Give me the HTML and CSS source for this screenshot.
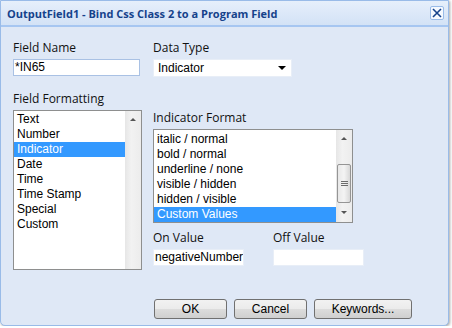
FILE: index.html
```html
<!DOCTYPE html>
<html lang="en">
<head>
    <meta charset="UTF-8" />
    <title>Bind Css Class</title>
    <link rel="stylesheet" href="styles.css">
</head>
<body>
    <div class="window">
        <div class="header">
            <span class="title">OutputField1 - Bind Css Class 2 to a Program Field</span>
            <span class="close">
                <svg width="10" height="10" viewBox="0 0 10 10"><path d="M1 1 L9 9 M9 1 L1 9" stroke="#15428b" stroke-width="1.6" /></svg>
            </span>
        </div>
        <div class="body">
            <div class="form-grid">
                <div class="form-group">
                    <label>Field Name</label>
                    <div class="textbox name-box">*IN65</div>
                </div>
                <div class="form-group">
                    <label>Data Type</label>
                    <div class="select">
                        <span>Indicator</span>
                        <span class="arrow"></span>
                    </div>
                </div>
                <div class="form-group formatting">
                    <label>Field Formatting</label>
                    <div class="listbox format-list">
                        <div class="items">
                            <div class="item">Text</div>
                            <div class="item">Number</div>
                            <div class="item selected">Indicator</div>
                            <div class="item">Date</div>
                            <div class="item">Time</div>
                            <div class="item">Time Stamp</div>
                            <div class="item">Special</div>
                            <div class="item">Custom</div>
                        </div>
                        <div class="scrollbar">
                            <span class="up"></span>
                        </div>
                    </div>
                </div>
                <div class="indicator">
                    <div class="form-group">
                        <label>Indicator Format</label>
                        <div class="listbox indicator-list">
                            <div class="items">
                                <div class="item">italic / normal</div>
                                <div class="item">bold / normal</div>
                                <div class="item">underline / none</div>
                                <div class="item">visible / hidden</div>
                                <div class="item">hidden / visible</div>
                                <div class="item selected">Custom Values</div>
                            </div>
                            <div class="scrollbar">
                                <span class="up"></span>
                                <span class="thumb"><i></i><i></i><i></i></span>
                                <span class="down"></span>
                            </div>
                        </div>
                    </div>
                    <div class="values">
                        <div class="form-group">
                            <label>On Value</label>
                            <div class="textbox value-box">negativeNumber</div>
                        </div>
                        <div class="form-group">
                            <label>Off Value</label>
                            <div class="textbox value-box"></div>
                        </div>
                    </div>
                </div>
            </div>
            <div class="buttons">
                <button class="btn">OK</button>
                <button class="btn">Cancel</button>
                <button class="btn wide">Keywords...</button>
            </div>
        </div>
    </div>
</body>
</html>
```

FILE: styles.css
```css
body {
    margin: 0;
    padding: 0;
    background-color: #ffffff;
    font-family: "Liberation Sans", Arial, sans-serif;
}

.window {
    width: 449px;
    height: 326px;
    box-sizing: border-box;
    border: 1px solid #99bbe8;
    border-radius: 0 0 5px 5px;
    background-color: #dfe8f6;
    box-shadow: 1px 1px 3px rgba(0, 0, 0, 0.35);
    display: flex;
    flex-direction: column;
    overflow: hidden;
}

.header {
    height: 24px;
    display: flex;
    align-items: center;
    justify-content: space-between;
    padding: 0 4px 0 6px;
    background: linear-gradient(#e6effb, #d3e2f6);
    border-bottom: 2px solid #a6c6f1;
}

.title {
    font-family: "Open Sans", sans-serif;
    font-weight: bold;
    font-size: 11px;
    color: #15428b;
}

.close {
    width: 14px;
    height: 14px;
    box-sizing: border-box;
    border: 1px solid #99bbe8;
    border-radius: 2px;
    background-color: #f5f9ff;
    display: flex;
    align-items: center;
    justify-content: center;
}

.body {
    flex: 1;
    padding: 12px 0 0 12px;
    display: flex;
    flex-direction: column;
}

.form-grid {
    display: grid;
    grid-template-columns: 129px 1fr;
    column-gap: 11px;
}

.form-group label {
    display: block;
    font-family: "Open Sans", sans-serif;
    font-size: 12px;
    color: #111;
    height: 17px;
    line-height: 17px;
    margin-bottom: 3px;
}

.textbox {
    height: 17px;
    box-sizing: border-box;
    border: 1px solid #a9c1e4;
    background-color: #fff;
    font-size: 12px;
    line-height: 15px;
    padding-left: 1px;
    white-space: nowrap;
    overflow: hidden;
}

.name-box {
    width: 127px;
    margin-top: 1px;
}

.select {
    width: 139px;
    height: 18px;
    box-sizing: border-box;
    background-color: #fff;
    border: 1px solid #e8eef7;
    font-size: 12px;
    line-height: 16px;
    padding-left: 4px;
    display: flex;
    justify-content: space-between;
    align-items: center;
}

.arrow {
    width: 0;
    height: 0;
    margin-right: 5px;
    border-left: 4px solid transparent;
    border-right: 4px solid transparent;
    border-top: 4px solid #000;
}

.formatting {
    margin-top: 13px;
}

.listbox {
    display: flex;
    box-sizing: border-box;
    border: 1px solid #8e8f8f;
    background-color: #fff;
}

.items {
    flex: 1;
    padding-top: 1px;
    font-size: 12px;
}

.item {
    height: 15px;
    line-height: 15px;
    padding-left: 3px;
    color: #000;
    white-space: nowrap;
}

.item.selected {
    background-color: #3399ff;
    color: #fff;
}

.format-list {
    height: 160px;
}

.indicator-list {
    width: 200px;
    height: 94px;
}

.indicator-list .items {
    padding-top: 2px;
}

.scrollbar {
    width: 16px;
    background: linear-gradient(to right, #e6e6e6, #f2f2f2 40%, #ececec);
    display: flex;
    flex-direction: column;
    align-items: center;
}

.up,
.down {
    width: 0;
    height: 0;
    border-left: 3px solid transparent;
    border-right: 3px solid transparent;
}

.up {
    margin-top: 7px;
    border-bottom: 3px solid #555;
}

.down {
    margin-top: 8px;
    border-top: 3px solid #555;
}

.thumb {
    width: 14px;
    height: 39px;
    margin-top: 24px;
    box-sizing: border-box;
    border: 1px solid #959595;
    border-radius: 2px;
    background: linear-gradient(to right, #e8e8e8, #f4f4f4 50%, #d8d8d8);
    display: flex;
    flex-direction: column;
    align-items: center;
    justify-content: center;
    gap: 1px;
}

.thumb i {
    width: 7px;
    height: 1px;
    background-color: #6c6c6c;
}

.indicator {
    padding-top: 32px;
}

.values {
    margin-top: 6px;
    display: flex;
    gap: 29px;
}

.value-box {
    width: 91px;
    border-color: #e8eef7;
}

.buttons {
    margin-top: auto;
    margin-bottom: 6px;
    padding-left: 141px;
    display: flex;
    gap: 7px;
}

.btn {
    width: 73px;
    height: 20px;
    padding: 0;
    border: 1px solid #707070;
    border-radius: 3px;
    background: linear-gradient(#f2f2f2, #ebebeb 50%, #dddddd 50%, #cfcfcf);
    font-family: "Liberation Sans", Arial, sans-serif;
    font-size: 12px;
    color: #000;
}

.btn.wide {
    width: 98px;
}
```
